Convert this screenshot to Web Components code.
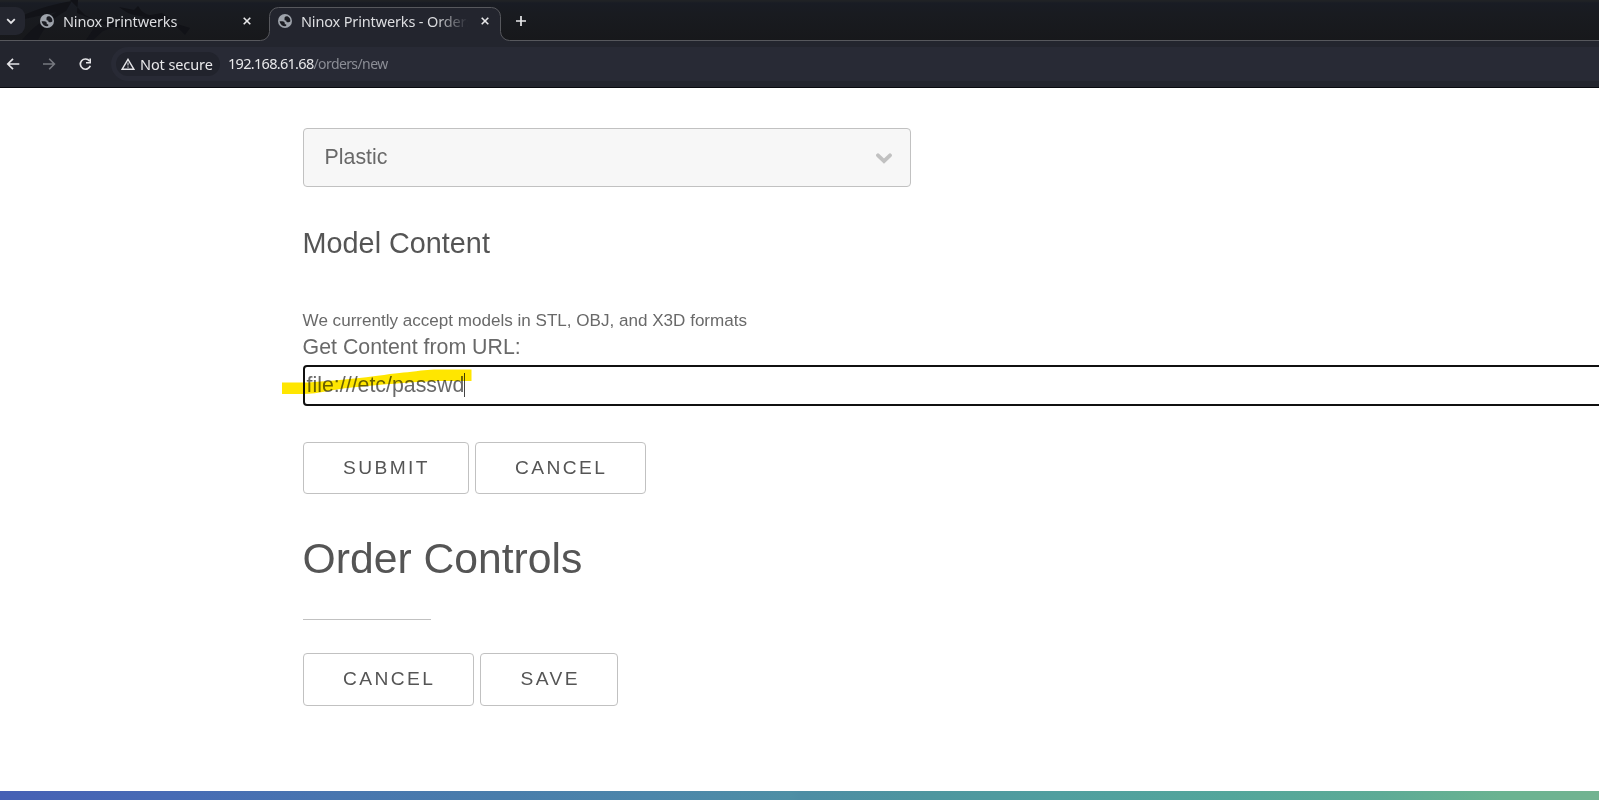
<!DOCTYPE html>
<html lang="en">
<head>
<meta charset="utf-8">
<title>Ninox Printwerks - Order</title>
<style>
html,body{margin:0;height:100%;overflow:hidden;background:#fff}
</style>
</head>
<body>
<app-window></app-window>
<script>
const define = (name, html) => {
  const t = document.createElement('template');
  t.innerHTML = html;
  customElements.define(name, class extends HTMLElement {
    constructor() {
      super();
      this.attachShadow({mode: 'open'}).append(t.content.cloneNode(true));
    }
  });
};

define('globe-icon', `<style>:host{display:block;width:14px;height:14px}svg{display:block}</style>
<svg width="14" height="14" viewBox="0 0 14 14"><circle cx="7" cy="7" r="7" fill="#9ea3ab"/>
<path d="M1.600 7.200h2.700c1.500 0 2.500.9 2.500 2.300v.7h1.400v1.900A5.400 5.400 0 0 1 1.600 7.200zM6.500 4.400C6.500 3 7.300 2.300 8.700 2.300h.8a5.300 5.300 0 0 1 2.900 5c-.6.7-1.300 1-2.400 1-1.300 0-1.800-.7-1.800-1.900H7.200c-.7 0-.7-.8-.7-2z" fill="#1b1c22"/></svg>`);

define('close-icon', `<style>:host{display:block;width:8px;height:8px}svg{display:block}</style>
<svg width="8" height="8" viewBox="0 0 8 8"><path d="M.7.7l6.600 6.600M7.300.7L.7 7.300" stroke="#e8e8ea" stroke-width="1.600" fill="none"/></svg>`);

define('browser-tab', `<style>
:host{display:flex;align-items:center;box-sizing:border-box;height:34px;color:#dddee1;font:14.500px "Noto Sans",sans-serif;letter-spacing:-.15px}
.t{margin-left:9px;width:160px;white-space:nowrap;overflow:hidden;line-height:20px}
:host([active]) .t{-webkit-mask-image:linear-gradient(90deg,#000 134px,transparent 167px);mask-image:linear-gradient(90deg,#000 134px,transparent 167px);width:167px}
close-icon{margin-left:auto}
</style><globe-icon></globe-icon><div class="t"><slot></slot></div><close-icon></close-icon>`);

define('tab-strip', `<style>
:host{display:flex;position:relative;height:41px;background:linear-gradient(#202225 0,#202225 1px,#191c24 3px,#191b20 14px,#17181b 40px)}
.art{position:absolute;left:0;top:0}
.search{position:relative;width:25px;height:28px;margin-top:7px;background:#24262f;border-radius:0 9px 9px 0;display:flex;align-items:center}
.search svg{margin-left:6px}
.one{position:relative;margin:4px 0 0 15px;width:211px}
.two{position:relative;margin:4px 0 0 27px;width:211px}
.plus{position:relative;margin:15px 0 0 26px;width:12px;height:12px}
</style>
<svg class="art" width="1599" height="41" viewBox="0 0 1599 41" fill="none">
<path d="M22 40C34 26 46 18 57 12L24 19V15C40 8 54 4 72 1L66 11C54 17 44 27 38 40z" fill="#121318"/>
<path d="M70 0l15 15c8 4 17 10 26 12 20 2 35 0 53-1l13 1 8 8 5-7-13-4-20-3-20 1-40-1-20-8L78 0z" fill="#111217"/>
<path d="M119 7c10 8 18 10 35 9-12-2-13-6-16-10l-4 4zM140 17l34 5-12-9z" fill="#111217"/>
<path d="M86 40l8-12h18l-9 3-10 9z" fill="#121318"/>
<path d="M0 40.500H260.500a9 9 0 0 0 9-9V16.500a9 9 0 0 1 9-9H491.500a9 9 0 0 1 9 9V31.500a9 9 0 0 0 9 9H1599V42H0z" fill="#23252e" stroke="#57585d"/></svg>
<div class="search"><svg width="10" height="7" viewBox="0 0 10 7"><path d="M1.200 1.200L5 5l3.800-3.800" stroke="#e4e4e7" stroke-width="1.800" fill="none"/></svg></div>
<browser-tab class="one">Ninox Printwerks</browser-tab>
<browser-tab class="two" active>Ninox Printwerks - Orders</browser-tab>
<svg class="plus" viewBox="0 0 12 12"><path d="M6 1v10M1 6h10" stroke="#e8e8ea" stroke-width="1.700"/></svg>`);

define('tool-bar', `<style>
:host{display:flex;align-items:center;height:47px;box-sizing:border-box;background:#23252e;border-bottom:1px solid #090a10;padding-left:6px;font:14.500px "Noto Sans",sans-serif;color:#e8e8ea}
svg{display:block;flex:none}
.fwd{margin-left:23px}.re{margin-left:23px}
.omni{display:flex;align-items:center;margin-left:19px;flex:1;height:34px;box-sizing:border-box;padding-left:5px;border-radius:17px 0 0 17px;background:#282a35}
.chip{display:flex;align-items:center;width:104px;height:24px;box-sizing:border-box;padding-left:5px;border-radius:12px;background:#21232c}
.chip span{margin-left:5px;white-space:nowrap;letter-spacing:-.1px;line-height:20px;padding-bottom:1px}
.url{margin-left:8px;white-space:nowrap;font-size:14.500px;letter-spacing:-.7px;line-height:20px;padding-bottom:1px}
.url i{font-style:normal;font-size:14px;letter-spacing:-.6px;color:#8b8d95}
</style>
<svg width="14" height="12" viewBox="0 0 14 12"><path d="M13.300 6H2M7 .8L1.800 6 7 11.200" stroke="#e4e4e7" stroke-width="1.700" fill="none"/></svg>
<svg class="fwd" width="13" height="12" viewBox="0 0 13 12"><path d="M0 6h11.300M6.200.8L11.400 6l-5.200 5.200" stroke="#777980" stroke-width="1.600" fill="none"/></svg>
<svg class="re" width="13" height="13" viewBox="0 0 13 13"><path d="M10.500 3A5.100 5.100 0 1 0 11.300 7.700" stroke="#e4e4e7" stroke-width="1.700" fill="none"/><path d="M12 .5v5H7V3.900h3.400V.5z" fill="#e4e4e7"/></svg>
<div class="omni"><div class="chip">
<svg width="14" height="12" viewBox="0 0 14 12"><path d="M7 1.300L12.800 11.200H1.200z" stroke="#e4e4e7" stroke-width="1.400" fill="none"/><path d="M7 4.500v3M7 8.400v1.300" stroke="#b9bac0" stroke-width="1.300"/></svg>
<span><slot name="status"></slot></span></div><div class="url"><slot name="host"></slot><i><slot name="path"></slot></i></div></div>`);

define('material-select', `<style>
:host{display:flex;box-sizing:border-box;width:608px;height:59px;border:1px solid #c1c1c1;border-radius:4px;background:#f7f7f7;color:#696969;font-size:21.33px;line-height:57px;padding:0 17px 0 21px;justify-content:space-between}
svg{margin-top:24px}
</style><slot></slot><svg width="17" height="12" viewBox="0 0 17 12"><path d="M2 2.300L8 8.100l6-5.800" stroke="#c1c1c1" stroke-width="3.800" stroke-linecap="round" fill="none"/></svg>`);

define('url-field', `<style>
:host{display:block;position:relative;box-sizing:border-box;width:1320px;height:41px;border:2px solid #101010;border-radius:4px;font-size:21.33px;line-height:35px;color:#696969;padding-left:2px}
span{display:inline-block;height:24px;line-height:24px;margin-top:6px;border-right:1px solid #444;vertical-align:top}
svg{position:absolute;left:-23px;top:-3px;mix-blend-mode:multiply}
</style><span><slot></slot></span>
<svg width="200" height="35" viewBox="0 0 200 35"><path d="M0 18.500H26C51 17 80 14 102 11 119 8 125 9 139 6.500L152 5.500H189.500V17H157C128 18 96 21 70 23.500 50 25 39 30 20 30H0z" fill="#ffe600"/></svg>`);

define('outline-button', `<style>
:host{display:block;box-sizing:border-box;height:52px;border:1px solid #c1c1c1;border-radius:4px;padding-left:39.400px;color:#555;font-size:19.2px;letter-spacing:2.400px;line-height:50px;white-space:nowrap}
</style><slot></slot>`);

define('order-page', `<style>
:host{display:flex;flex-direction:column;align-items:flex-start;height:703px;box-sizing:border-box;padding:40px 0 0 302.600px;background:#fff;color:#696969;font-family:"Liberation Sans",Arial,sans-serif;font-size:21.33px;overflow:hidden}
h2,h3,p{margin:0;font-weight:400}
h3{margin-top:36px;font-size:28.8px;line-height:40px;color:#555}
.note{margin-top:45px;font-size:17.07px;line-height:26px}
.label{margin-top:-1px;line-height:28px}
url-field{margin-top:4px}
.row{display:flex;gap:6px;margin-top:36px}
h2{margin-top:34px;font-size:42.67px;line-height:60px;color:#555}
.rule{width:128px;height:1px;margin-top:31px;background:#c1c1c1}
.row.last{margin-top:33px}.last outline-button{height:53px}
.save{padding-left:40px}
</style>
<material-select>Plastic</material-select>
<h3>Model Content</h3>
<p class="note">We currently accept models in STL, OBJ, and X3D formats</p>
<p class="label">Get Content from URL:</p>
<url-field>file:///etc/passwd</url-field>
<div class="row"><outline-button style="width:166px">SUBMIT</outline-button><outline-button style="width:171px">CANCEL</outline-button></div>
<h2>Order Controls</h2>
<div class="rule"></div>
<div class="row last"><outline-button style="width:171px">CANCEL</outline-button><outline-button class="save" style="width:138px">SAVE</outline-button></div>`);

define('page-footer', `<style>
:host{display:block;height:9px;background:linear-gradient(90deg,#4660b5 0,#476bb5 170px,#4876af 340px,#497dab 500px,#4c86aa 650px,#4e8fa5 790px,#4d8da4 800px,#4e969f 930px,#509f9f 1060px,#53a69b 1230px,#5dab96 1380px,#6ab391 1500px,#72b391 1599px)}
</style>`);

define('app-window', `<style>:host{display:flex;flex-direction:column;width:100%;height:800px;overflow:hidden}tab-strip,tool-bar,order-page,page-footer{flex:none}</style>
<tab-strip></tab-strip>
<tool-bar><span slot="status">Not secure</span><span slot="host">192.168.61.68</span><span slot="path">/orders/new</span></tool-bar>
<order-page></order-page><page-footer></page-footer>`);
</script>
</body>
</html>
